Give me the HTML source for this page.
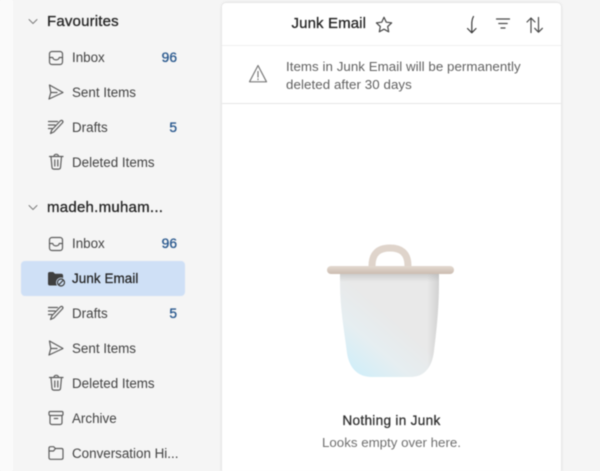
<!DOCTYPE html>
<html><head><meta charset="utf-8"><style>
html,body{margin:0;padding:0;width:600px;height:471px;overflow:hidden;background:#f5f5f5;font-family:"Liberation Sans",sans-serif}
#w{position:relative;width:600px;height:471px;overflow:hidden;filter:blur(.4px)}
.t{position:absolute;white-space:nowrap;line-height:18px;height:18px}
.i{font-size:13.4px;color:#424242;left:72px}
.h{font-size:15px;color:#242424;left:47px;font-weight:400;-webkit-text-stroke:.3px #242424;letter-spacing:.18px}
.n{font-size:13.8px;color:#2b5a8f;-webkit-text-stroke:.35px #2b5a8f;text-align:right;right:423px}
svg{position:absolute;overflow:visible}
.s{fill:none;stroke:#5c5c5c;stroke-width:1.2;stroke-linejoin:round;stroke-linecap:round}
</style></head><body><div id="w">
<div style="position:absolute;left:0;top:0;width:13px;height:471px;background:#fafafa"></div>
<div style="position:absolute;left:21px;top:261px;width:164px;height:35px;background:#cfe0f6;border-radius:4px"></div>
<div style="position:absolute;left:222px;top:3px;width:339px;height:480px;background:#fff;border-radius:4px;box-shadow:0 0 3px rgba(0,0,0,.14)"></div>
<div style="position:absolute;left:222px;top:45px;width:339px;height:1px;background:#efefef"></div>
<div style="position:absolute;left:222px;top:103px;width:339px;height:1px;background:#e6e6e6"></div>

<svg width="12" height="8" style="left:27px;top:18px" class="s"><path d="M2 1.5l4 4 4-4" stroke="#777" stroke-width=".9"/></svg>
<svg width="12" height="8" style="left:27px;top:204px" class="s"><path d="M2 1.5l4 4 4-4" stroke="#777" stroke-width=".9"/></svg>
<div class="t h" style="top:13px">Favourites</div>
<div class="t h" style="top:199px;letter-spacing:.26px">madeh.muham...</div>

<div class="t i" style="top:49px">Inbox</div><div class="t n" style="top:49px">96</div>
<div class="t i" style="top:84px">Sent Items</div>
<div class="t i" style="top:119px">Drafts</div><div class="t n" style="top:119px">5</div>
<div class="t i" style="top:154px">Deleted Items</div>
<div class="t i" style="top:235px">Inbox</div><div class="t n" style="top:235px">96</div>
<div class="t i" style="top:270px;color:#242424;-webkit-text-stroke:.25px #242424;letter-spacing:.1px">Junk Email</div>
<div class="t i" style="top:305px">Drafts</div><div class="t n" style="top:305px">5</div>
<div class="t i" style="top:340px">Sent Items</div>
<div class="t i" style="top:375px">Deleted Items</div>
<div class="t i" style="top:410px">Archive</div>
<div class="t i" style="top:445px">Conversation Hi...</div>

<!-- inbox -->
<svg width="16" height="16" style="left:48px;top:50px" class="s"><rect x="1.5" y="1.5" width="13" height="13" rx="2.5"/><path d="M1.5 7.5h3.2c.5 1.6 1.7 2.4 3.3 2.4s2.8-.8 3.3-2.4h3.2"/></svg>
<svg width="16" height="16" style="left:48px;top:236px" class="s"><rect x="1.5" y="1.5" width="13" height="13" rx="2.500"/><path d="M1.5 7.5h3.2c.5 1.6 1.700 2.4 3.3 2.4s2.8-.8 3.3-2.4h3.2"/></svg>
<!-- sent -->
<svg width="16" height="16" style="left:48px;top:84px" class="s"><path d="M1.5 1l13.5 7.500L1 15l1.800-6.500zM3 8.500h6"/></svg>
<svg width="16" height="16" style="left:48px;top:340px" class="s"><path d="M1.5 1l13.5 7.500L1 15l1.800-6.500zM3 8.500h6"/></svg>
<!-- drafts -->
<svg width="18" height="16" style="left:48px;top:119px" class="s"><path d="M.5 2.500h9M.5 6h6.500M.5 9.500h3.500M2.500 14.500l1.300-3.600 8.500-9c.7-.7 1.700-.7 2.200-.1.6.6.500 1.500-.2 2.200l-8.500 9z"/></svg>
<svg width="18" height="16" style="left:48px;top:305px" class="s"><path d="M.5 2.500h9M.5 6h6.500M.5 9.500h3.500M2.500 14.500l1.300-3.600 8.500-9c.7-.7 1.700-.7 2.200-.1.6.6.500 1.500-.2 2.200l-8.500 9z"/></svg>
<!-- deleted -->
<svg width="16" height="18" style="left:49px;top:153px" class="s"><path d="M.5 3.500h13.500M5 3.300c0-1.200 1-2 2.200-2s2.300.8 2.300 2M2 3.500l1 11c.1 1 .9 1.600 1.800 1.600h4.900c.9 0 1.700-.6 1.800-1.600l1-11M5.800 7v6M8.800 7v6"/></svg>
<svg width="16" height="18" style="left:49px;top:374px" class="s"><path d="M.5 3.500h13.500M5 3.300c0-1.200 1-2 2.200-2s2.300.8 2.300 2M2 3.500l1 11c.1 1 .9 1.600 1.800 1.600h4.900c.9 0 1.700-.6 1.800-1.600l1-11M5.800 7v6M8.800 7v6"/></svg>
<!-- junk -->
<svg width="18" height="16" style="left:48px;top:271px"><path d="M0 2.700C0 1.500 .8 1 1.700 1h3.500l1.800 1.800h6.300c1 0 1.800.8 1.800 1.800V14.500H1.700C.7 14.500 0 13.800 0 12.800z" fill="#3f3f3f"/><circle cx="13" cy="11.500" r="5" fill="#cfe0f6"/><circle cx="13" cy="11.500" r="3.500" fill="none" stroke="#3f3f3f" stroke-width="1.200"/><path d="M10.600 13.900l4.800-4.800" stroke="#3f3f3f" stroke-width="1.200"/></svg>
<!-- archive -->
<svg width="16" height="16" style="left:48px;top:410px" class="s"><rect x="1" y="1.500" width="14" height="4" rx="1.200"/><path d="M2 5.500v7.200c0 1 .8 1.800 1.800 1.800h8.400c1 0 1.800-.8 1.800-1.800V5.500M6.300 8.500h3.400"/></svg>
<!-- folder -->
<svg width="16" height="16" style="left:48px;top:445px" class="s"><path d="M1 3.200C1 2.300 1.700 1.700 2.600 1.700h3l1.800 1.800h6c.9 0 1.600.7 1.600 1.600v7.600c0 .9-.7 1.600-1.600 1.600H2.600c-.9 0-1.600-.7-1.600-1.600z"/><path d="M1 6h4.500l2-2.500"/></svg>

<!-- header -->
<div class="t" style="left:291.500px;top:15px;font-size:15px;color:#242424;-webkit-text-stroke:.3px #242424;letter-spacing:.12px">Junk Email</div>
<svg width="18" height="18" style="left:375px;top:16px" class="s"><path d="M9 1.300l2.300 4.900 5.300.7-3.900 3.600 1 5.300L9 13.200l-4.700 2.600 1-5.300L1.400 6.900l5.300-.7z" stroke="#4a4a4a"/></svg>
<svg width="14" height="20" style="left:465px;top:15px" class="s"><path d="M8.500 1.500C7 4 6.800 6 6.800 9v8.500M2.500 13.500l4.300 4.300 4.200-4.300" stroke="#3a3a3a"/></svg>
<svg width="16" height="14" style="left:495px;top:17px" class="s"><path d="M1.500 2h13M3.800 6.500h8.400M6 11h4" stroke="#4a4a4a"/></svg>
<svg width="18" height="18" style="left:526px;top:16px" class="s"><path d="M5 16.500V2M1 6l4-4 4 4M12.500 1.500V16M8.700 12.300l3.800 3.900 3.900-3.900" stroke="#4a4a4a"/></svg>

<!-- banner -->
<svg width="20" height="20" style="left:248px;top:64px" class="s"><path d="M10 1.500l8.500 16.300H1.500zM10 7.500v5.500M10 15v.6" stroke="#7a7a7a"/></svg>
<div class="t" style="left:286px;top:58px;font-size:13.300px;letter-spacing:.05px;color:#616161">Items in Junk Email will be permanently</div>
<div class="t" style="left:286px;top:76px;font-size:13.300px;letter-spacing:.08px;color:#616161">deleted after 30 days</div>

<!-- trash illustration -->
<svg width="160" height="150" style="left:310px;top:235px">
<defs>
<linearGradient id="b" x1="0.1" y1="1" x2="0.55" y2="0.45"><stop offset="0" stop-color="#cdeefa"/><stop offset=".55" stop-color="#e6eef1"/><stop offset="1" stop-color="#e9e9e9"/></linearGradient>
<linearGradient id="e" x1="0" y1="0" x2="1" y2="0"><stop offset="0" stop-color="#000" stop-opacity="0"/><stop offset=".88" stop-color="#000" stop-opacity="0"/><stop offset="1" stop-color="#000" stop-opacity=".1"/></linearGradient>
<linearGradient id="t" x1="0" y1="0" x2="0" y2="1"><stop offset="0" stop-color="#a9a9a9" stop-opacity=".55"/><stop offset="1" stop-color="#aaa" stop-opacity="0"/></linearGradient>
<linearGradient id="l" x1="0" y1="0" x2="0" y2="1"><stop offset="0" stop-color="#e3d9d0"/><stop offset="1" stop-color="#cbbcb0"/></linearGradient>
</defs>
<path d="M30 37H129V47C129 75 126 100 124 116C122 132 115 142 100 142H62C47 142 39 132 37 118C35 100 30 75 30 47Z" fill="url(#b)"/>
<path d="M30 37H129V47C129 75 126 100 124 116C122 132 115 142 100 142H62C47 142 39 132 37 118C35 100 30 75 30 47Z" fill="url(#e)"/>
<rect x="30" y="37" width="99" height="10" fill="url(#t)"/>
<path d="M62 31C62 17 70 13 80 13S98 17 98 31" fill="none" stroke="#dfd4cb" stroke-width="7"/>
<rect x="17" y="31" width="127" height="8" rx="4" fill="url(#l)"/>
</svg>

<div class="t" style="left:222px;width:339px;text-align:center;top:412px;font-size:13.600px;letter-spacing:.3px;color:#333;-webkit-text-stroke:.3px #333">Nothing in Junk</div>
<div class="t" style="left:222px;width:339px;text-align:center;top:434px;font-size:13.300px;color:#707070">Looks empty over here.</div>
</div></body></html>
